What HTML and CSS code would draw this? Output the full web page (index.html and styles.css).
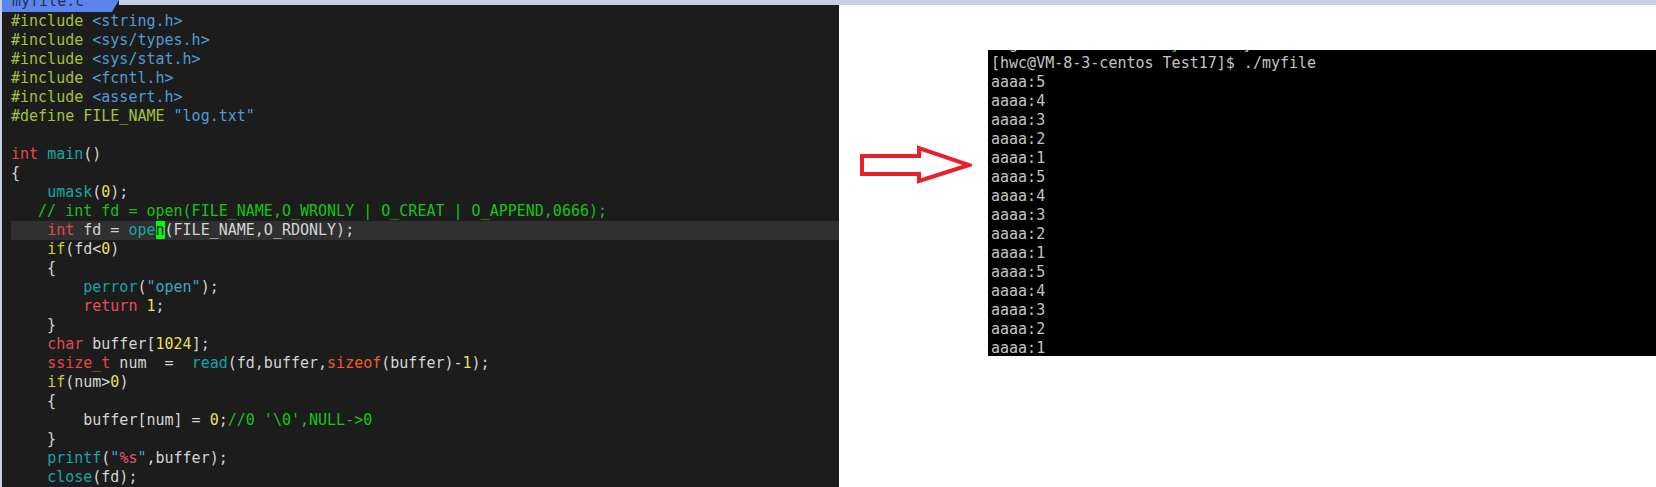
FILE: index.html
```html
<!DOCTYPE html>
<html lang="en">
<head>
    <meta charset="UTF-8">
    <title>myfile.c - open / read</title>
    <link rel="stylesheet" href="styles.css">
</head>
<body>

    <div class="screen">

        <!-- Editeur vim -->
        <section class="editor">
            <div class="editor-head">
                <div class="tab"><span class="tab-name">myfile.c</span></div>
                <div class="head-fill"></div>
            </div>
            <div class="code">
                <div class="line"><span class="pp">#include</span> <span class="hd">&lt;string.h&gt;</span></div>
                <div class="line"><span class="pp">#include</span> <span class="hd">&lt;sys/types.h&gt;</span></div>
                <div class="line"><span class="pp">#include</span> <span class="hd">&lt;sys/stat.h&gt;</span></div>
                <div class="line"><span class="pp">#include</span> <span class="hd">&lt;fcntl.h&gt;</span></div>
                <div class="line"><span class="pp">#include</span> <span class="hd">&lt;assert.h&gt;</span></div>
                <div class="line"><span class="pp">#define FILE_NAME</span> <span class="hd">"log.txt"</span></div>
                <div class="line"></div>
                <div class="line"><span class="ty">int</span> <span class="fn">main</span>()</div>
                <div class="line">{</div>
                <div class="line">    <span class="fn">umask</span>(<span class="nu">0</span>);</div>
                <div class="line">   <span class="cm">// int fd = open(FILE_NAME,O_WRONLY | O_CREAT | O_APPEND,0666);</span></div>
                <div class="line current">    <span class="ty">int</span> fd = <span class="fn">ope</span><span class="cur">n</span>(FILE_NAME,O_RDONLY);</div>
                <div class="line">    <span class="kw">if</span>(fd&lt;<span class="nu">0</span>)</div>
                <div class="line">    {</div>
                <div class="line">        <span class="fn">perror</span>(<span class="st">"open"</span>);</div>
                <div class="line">        <span class="rt">return</span> <span class="nu">1</span>;</div>
                <div class="line">    }</div>
                <div class="line">    <span class="ty">char</span> buffer[<span class="nu">1024</span>];</div>
                <div class="line">    <span class="ty">ssize_t</span> num  =  <span class="fn">read</span>(fd,buffer,<span class="op">sizeof</span>(buffer)-<span class="nu">1</span>);</div>
                <div class="line">    <span class="kw">if</span>(num&gt;<span class="nu">0</span>)</div>
                <div class="line">    {</div>
                <div class="line">        buffer[num] = <span class="nu">0</span>;<span class="cm">//0 '\0',NULL-&gt;0</span></div>
                <div class="line">    }</div>
                <div class="line">    <span class="fn">printf</span>(<span class="st">"<span class="fmt">%s</span>"</span>,buffer);</div>
                <div class="line">    <span class="fn">close</span>(fd);</div>
            </div>
        </section>

        <!-- Fleche + terminal -->
        <section class="result">
            <svg class="arrow" width="112" height="42" viewBox="0 0 112 42">
                <polygon points="2,12 59,12 59,4 109,21 59,37 59,30 2,30"
                         fill="none" stroke="#e8202a" stroke-width="4" stroke-linejoin="miter"/>
            </svg>

            <div class="terminal">
                <div class="term-text">
                    <div class="tline">log.txt  Makefile  <span class="exe">myfile</span>  myfile.c</div>
                    <div class="tline">[hwc@VM-8-3-centos Test17]$ ./myfile</div>
                    <div class="tline">aaaa:5</div>
                    <div class="tline">aaaa:4</div>
                    <div class="tline">aaaa:3</div>
                    <div class="tline">aaaa:2</div>
                    <div class="tline">aaaa:1</div>
                    <div class="tline">aaaa:5</div>
                    <div class="tline">aaaa:4</div>
                    <div class="tline">aaaa:3</div>
                    <div class="tline">aaaa:2</div>
                    <div class="tline">aaaa:1</div>
                    <div class="tline">aaaa:5</div>
                    <div class="tline">aaaa:4</div>
                    <div class="tline">aaaa:3</div>
                    <div class="tline">aaaa:2</div>
                    <div class="tline">aaaa:1</div>
                </div>
            </div>
        </section>

    </div>

</body>
</html>
```

FILE: styles.css
```css
/* Page */
body {
    margin: 0;
    background-color: #fff;
    overflow: hidden;
}

.screen {
    display: flex;
    height: 487px;
    overflow: hidden;
}

/* Editeur */
.editor {
    width: 837px;
    flex-shrink: 0;
    border-left: 2px solid #c6d0e2;
    background-color: #1c1c1c;
    overflow: hidden;
}

.editor-head {
    display: flex;
    height: 12px;
}

.tab {
    width: 117px;
    height: 12px;
    background-color: #5b84ef;
    clip-path: polygon(0 0, 100% 0, 94% 100%, 0 100%);
    overflow: hidden;
}

.tab-name {
    display: block;
    margin-top: -8px;
    padding-left: 10px;
    font-family: "DejaVu Sans Mono", monospace;
    font-size: 15px;
    line-height: 19px;
    color: #243150;
}

.head-fill {
    flex: 1;
    border-top: 5px solid #c6d0e2;
}

.code {
    padding-left: 9px;
    font-family: "DejaVu Sans Mono", monospace;
    font-size: 15px;
    line-height: 19px;
    color: #d4d4d4;
}

.line {
    height: 19px;
    white-space: pre;
}

.line.current {
    background-color: #303030;
}

/* Coloration syntaxique */
.pp { color: #a4c23c; }
.hd { color: #4f9dd6; }
.st { color: #3ca6c6; }
.ty { color: #e4474f; }
.rt { color: #e84c62; }
.fn { color: #17a6a6; }
.nu { color: #e6e05a; }
.kw { color: #d0cf2c; }
.op { color: #ef5f2c; }
.cm { color: #16c416; }
.fmt { color: #e8507a; }

.cur {
    background-color: #00ff00;
    color: #000;
}

/* Partie droite */
.result {
    flex: 1;
    display: flex;
    align-items: flex-start;
    border-top: 5px solid #c6d0e2;
    padding-left: 21px;
}

.arrow {
    flex-shrink: 0;
    margin-top: 139px;
}

.terminal {
    flex: 1;
    height: 306px;
    margin-top: 45px;
    margin-left: 16px;
    background-color: #000;
    overflow: hidden;
}

.term-text {
    margin-top: -15px;
    padding-left: 3px;
    font-family: "DejaVu Sans Mono", monospace;
    font-size: 15px;
    line-height: 19px;
    color: #c4c4c4;
}

.tline {
    height: 19px;
    white-space: pre;
}

.exe {
    color: #3cdc3c;
}
```
